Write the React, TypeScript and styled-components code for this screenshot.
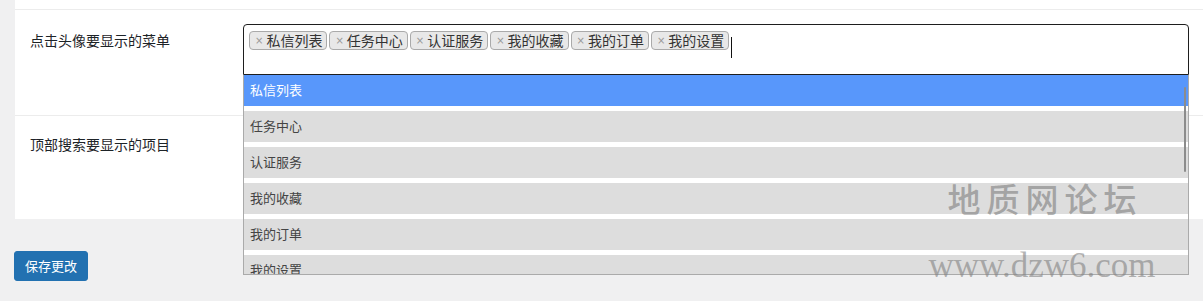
import styled, { createGlobalStyle } from 'styled-components';

const GlobalStyle = createGlobalStyle`
    html, body {
        margin: 0;
        padding: 0;
        background: #f0f0f1;
    }
    body {
        font-family: "Noto Sans CJK SC", "Noto Sans", sans-serif;
        color: #1d2327;
    }
`;

const Page = styled.div`
    position: relative;
    min-height: 301px;
    padding-left: 14px;
    box-sizing: border-box;
    overflow: hidden;
`;

const Panel = styled.div`
    margin-left: 1px;
    background: #fff;
`;

const PrevRow = styled.div`
    height: 9px;
    border-bottom: 1px solid #ececec;
`;

const Row = styled.div<{ $height: number; $last?: boolean }>`
    display: flex;
    height: ${({ $height }) => $height}px;
    padding-top: 14px;
    box-sizing: border-box;
    border-bottom: ${({ $last }) => ($last ? 'none' : '1px solid #ececec')};
`;

const Label = styled.div<{ $offset: number }>`
    width: 228px;
    flex: none;
    padding: ${({ $offset }) => $offset}px 0 0 15px;
    box-sizing: border-box;
    font-size: 14px;
    line-height: 20px;
    color: #1d2327;
`;

const Field = styled.div`
    position: relative;
    flex: 1;
    margin-right: 14px;
    align-self: flex-start;
`;

const SelectBox = styled.div`
    display: flex;
    flex-wrap: wrap;
    align-items: flex-start;
    gap: 2px;
    min-height: 51px;
    padding: 6px 5px 0;
    box-sizing: border-box;
    border: 1px solid #1e1e1e;
    border-radius: 4px 4px 0 0;
    background: #fff;
`;

const Tag = styled.span`
    display: inline-flex;
    align-items: center;
    height: 19px;
    padding: 0 4px 0 5px;
    box-sizing: border-box;
    border: 1px solid #aaa;
    border-radius: 4px;
    background: #e8e8e8;
    font-size: 14px;
    line-height: 17px;
    color: #333;
`;

const Remove = styled.span`
    font-family: "DejaVu Sans", sans-serif;
    font-size: 10px;
    color: #999;
    margin-right: 3px;
`;

const Caret = styled.span`
    display: block;
    width: 1px;
    height: 21px;
    margin-top: 6px;
    background: #111;
`;

const Dropdown = styled.div`
    position: absolute;
    top: 100%;
    left: 0;
    right: 0;
    height: 200px;
    box-sizing: border-box;
    border: 1px solid #aaa;
    border-top: none;
    background: #fff;
    overflow: hidden;
    z-index: 2;
`;

const Option = styled.div<{ $active?: boolean }>`
    height: 31px;
    margin-bottom: 5px;
    padding-left: 6px;
    font-size: 13px;
    line-height: 29px;
    background: ${({ $active }) => ($active ? '#5897fb' : '#dddddd')};
    color: ${({ $active }) => ($active ? '#fff' : '#444')};
`;

const ScrollThumb = styled.div`
    position: absolute;
    top: 12px;
    right: 2px;
    width: 2px;
    height: 85px;
    border-radius: 1px;
    background: #8c8c8c;
`;

const SaveButton = styled.button`
    display: block;
    margin-top: 32px;
    height: 30px;
    padding: 0 10px;
    border: 1px solid #2271b1;
    border-radius: 3px;
    background: #2271b1;
    color: #fff;
    font-family: "Noto Sans CJK SC", sans-serif;
    font-size: 13px;
    line-height: 28px;
    cursor: pointer;
`;

const Watermark = styled.div`
    position: absolute;
    left: 927px;
    top: 182px;
    width: 230px;
    display: flex;
    flex-direction: column;
    align-items: center;
    pointer-events: none;
    z-index: 5;
`;

const MarkTitle = styled.div`
    font-family: "Noto Sans CJK SC", serif;
    font-size: 33px;
    line-height: 32px;
    letter-spacing: 6px;
    margin-right: -6px;
    font-weight: 500;
    color: rgba(115, 115, 115, 0.55);
`;

const MarkUrl = styled.div`
    margin-top: 34px;
    font-family: "Liberation Serif", serif;
    font-size: 35px;
    line-height: 35px;
    color: rgba(130, 130, 130, 0.6);
`;

const menuItems = ['私信列表', '任务中心', '认证服务', '我的收藏', '我的订单', '我的设置'];

export default function App() {
    return (
        <>
            <GlobalStyle />
            <Page>
                <Panel>
                    <PrevRow />
                    <Row $height={106}>
                        <Label $offset={6}>点击头像要显示的菜单</Label>
                        <Field>
                            <SelectBox>
                                {menuItems.map((item) => (
                                    <Tag key={item}>
                                        <Remove>×</Remove>
                                        {item}
                                    </Tag>
                                ))}
                                <Caret />
                            </SelectBox>
                            <Dropdown>
                                {menuItems.map((item, i) => (
                                    <Option key={item} $active={i === 0}>{item}</Option>
                                ))}
                                <ScrollThumb />
                            </Dropdown>
                        </Field>
                    </Row>
                    <Row $height={103} $last>
                        <Label $offset={4}>顶部搜索要显示的项目</Label>
                    </Row>
                </Panel>
                <SaveButton>保存更改</SaveButton>
                <Watermark>
                    <MarkTitle>地质网论坛</MarkTitle>
                    <MarkUrl>www.dzw6.com</MarkUrl>
                </Watermark>
            </Page>
        </>
    );
}
